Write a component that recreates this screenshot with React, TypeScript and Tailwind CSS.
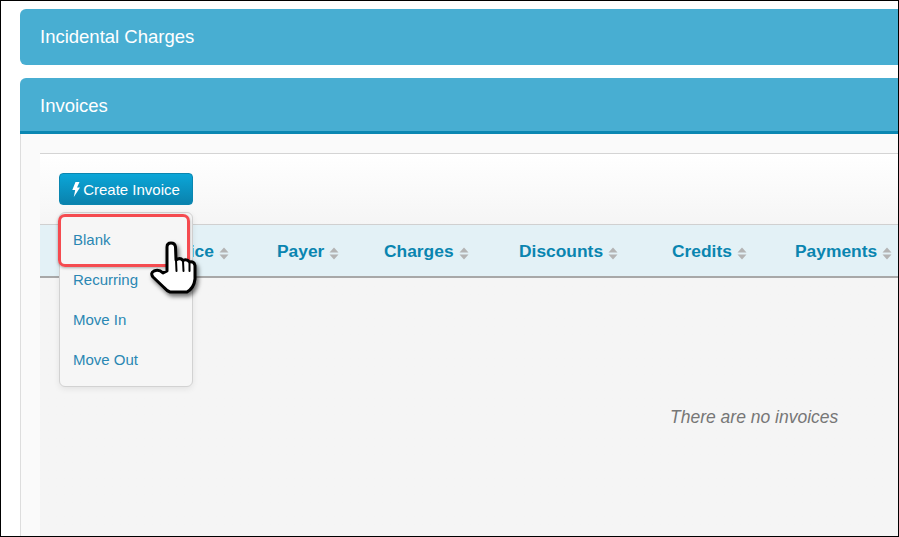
const font = "font-['Liberation_Sans',Arial,sans-serif]";

function Sort() {
  return (
    <svg width="10" height="13" viewBox="0 0 10 13" className="ml-[5px] mt-[3px] shrink-0">
      <path d="M5 0.500 L9.500 5.500 L0.500 5.500 Z M0.500 7.500 L9.500 7.500 L5 12.500 Z" fill="#b4b4b4" />
    </svg>
  );
}

function Col({ label, w }: { label: string; w: string }) {
  return (
    <div className={`flex items-center shrink-0 ${w}`}>
      <span className="text-[17.400px] font-bold text-[#0a85b0] leading-none">{label}</span>
      <Sort />
    </div>
  );
}

function Hand() {
  return (
    <svg
      width="60"
      height="68"
      viewBox="0 0 60 68"
      className="absolute left-[140px] top-[230px] drop-shadow-[2px_3px_2px_rgba(0,0,0,0.55)]"
    >
      <path
        d="M26 40 L26 16 Q26 12 30 12 Q34 12 34.500 16 L35 29 Q39 26 42 29.500 Q46 27.500 48.500 31 Q53 30 54 34.500 L54 48 Q53 57 46 61 L29 61 Q26 60 23 56.500 L12 46 Q9 42 13 40 Q18 38 22 42 Z"
        fill="#fff"
        stroke="#000"
        strokeWidth="3"
        strokeLinejoin="round"
      />
      <path d="M35 29 L35.500 40 M42 30 L42.500 40 M48.500 32 L48.500 40" fill="none" stroke="#000" strokeWidth="2" strokeLinecap="round" />
    </svg>
  );
}

export default function App() {
  return (
    <div className={`${font} relative w-[899px] h-[537px] overflow-hidden bg-white border-l border-t border-r border-b border-black pt-2 pl-[19px]`}>
      <div className="w-[900px]">
        <div className="h-[56px] rounded-[6px] bg-[#48aed2] flex items-center pl-5 text-white text-[18.500px]">
          Incidental Charges
        </div>
        <div className="mt-[13px] h-[56px] rounded-t-[6px] bg-[#48aed2] border-b-[3px] border-[#0a87b2] flex items-center pl-5 pt-[2px] text-white text-[18.500px]">
          Invoices
        </div>
        <div className="h-[420px] bg-[#fafafa] border-l border-[#dddddd] pl-[19px] pt-[19px]">
          <div className="h-[400px] border-t border-[#d4d4d4] bg-gradient-to-b from-white from-0% to-[#f5f5f5] to-[18%]">
            <div className="h-[70px] pl-[19px] pt-[19px]">
              <button className="w-[134px] h-[32px] rounded-[4px] bg-gradient-to-b from-[#0ba6d8] to-[#0a82ad] border border-[#0a86b0] text-white text-[15px] flex items-center justify-center gap-[3px] pt-[2px]">
                <svg width="8" height="15" viewBox="0 0 8 15" className="-mt-[2px]">
                  <path d="M3.500 0 L7.500 0 L5 5.500 L8 5.500 L1.800 15 L3.200 8 L0.300 8 Z" fill="#fff" />
                </svg>
                Create Invoice
              </button>
            </div>
            <div className="h-[54px] bg-[#e3f1f6] border-t border-b-2 border-t-[#d0d0d0] border-b-[#a8a8a8] flex items-center pt-[2px]">
              <div className="w-[114px] shrink-0" />
              <Col label="Invoice" w="w-[123px]" />
              <Col label="Payer" w="w-[107px]" />
              <Col label="Charges" w="w-[135px]" />
              <Col label="Discounts" w="w-[153px]" />
              <Col label="Credits" w="w-[123px]" />
              <Col label="Payments" w="w-[110px]" />
            </div>
            <div className="pt-[129px] pl-[630px] text-[17.500px] italic text-[#777777] leading-5">
              There are no invoices
            </div>
          </div>
        </div>
      </div>

      <div className="absolute left-[58px] top-[211px] w-[134px] h-[175px] rounded-[6px] bg-[#f6f6f6] border border-[#d2d2d2] shadow-[0_2px_6px_rgba(0,0,0,0.08)] pt-[7px] text-[15px] text-[#2a87b3]">
        <div className="h-10 pl-[13px] flex items-center">Blank</div>
        <div className="h-10 pl-[13px] flex items-center">Recurring</div>
        <div className="h-10 pl-[13px] flex items-center">Move In</div>
        <div className="h-10 pl-[13px] flex items-center">Move Out</div>
      </div>
      <div className="absolute left-[57px] top-[213px] w-[132px] h-[53px] rounded-[7px] border-[3.500px] border-[#f54b50] shadow-[0_1px_3px_rgba(0,0,0,0.3)]" />
      <Hand />
    </div>
  );
}
